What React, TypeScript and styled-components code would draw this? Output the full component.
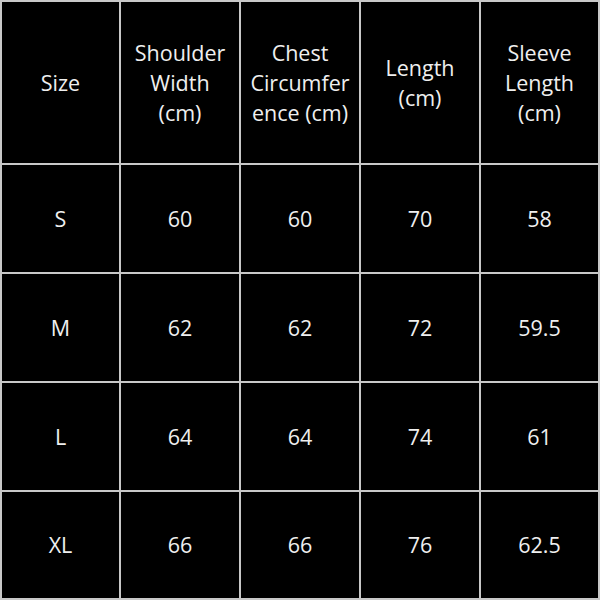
import React from 'react';
import styled, { createGlobalStyle } from 'styled-components';

const GlobalStyle = createGlobalStyle`
	html, body {
		margin: 0;
		padding: 0;
		background: #000;
	}
`;

const Grid = styled.div`
	box-sizing: border-box;
	width: 600px;
	height: 600px;
	display: grid;
	grid-template-columns: 119px 120px 120px 120px 1fr;
	grid-template-rows: 163px 109px 109px 109px 1fr;
	border-top: 2px solid #c8c8c8;
	border-left: 2px solid #c8c8c8;
	background: #000;
	font-family: 'Open Sans', 'Liberation Sans', sans-serif;
`;

const Cell = styled.div`
	box-sizing: border-box;
	display: flex;
	align-items: center;
	justify-content: center;
	text-align: center;
	border-right: 2px solid #c8c8c8;
	border-bottom: 2px solid #c8c8c8;
	color: #efefef;
	font-size: 21.5px;
	line-height: 30px;
`;

const headers = [
	['Size'],
	['Shoulder', 'Width', '(cm)'],
	['Chest', 'Circumfer', 'ence (cm)'],
	['Length', '(cm)'],
	['Sleeve', 'Length', '(cm)'],
];

const rows = [
	['S', '60', '60', '70', '58'],
	['M', '62', '62', '72', '59.5'],
	['L', '64', '64', '74', '61'],
	['XL', '66', '66', '76', '62.5'],
];

const App: React.FC = () => (
	<>
		<GlobalStyle />
		<Grid>
			{headers.map((lines, i) => (
				<Cell key={'h' + i}>
					<div>
						{lines.map((l, j) => (
							<div key={j}>{l}</div>
						))}
					</div>
				</Cell>
			))}
			{rows.map((r, i) => r.map((v, j) => <Cell key={i + '-' + j}>{v}</Cell>))}
		</Grid>
	</>
);

export default App;
